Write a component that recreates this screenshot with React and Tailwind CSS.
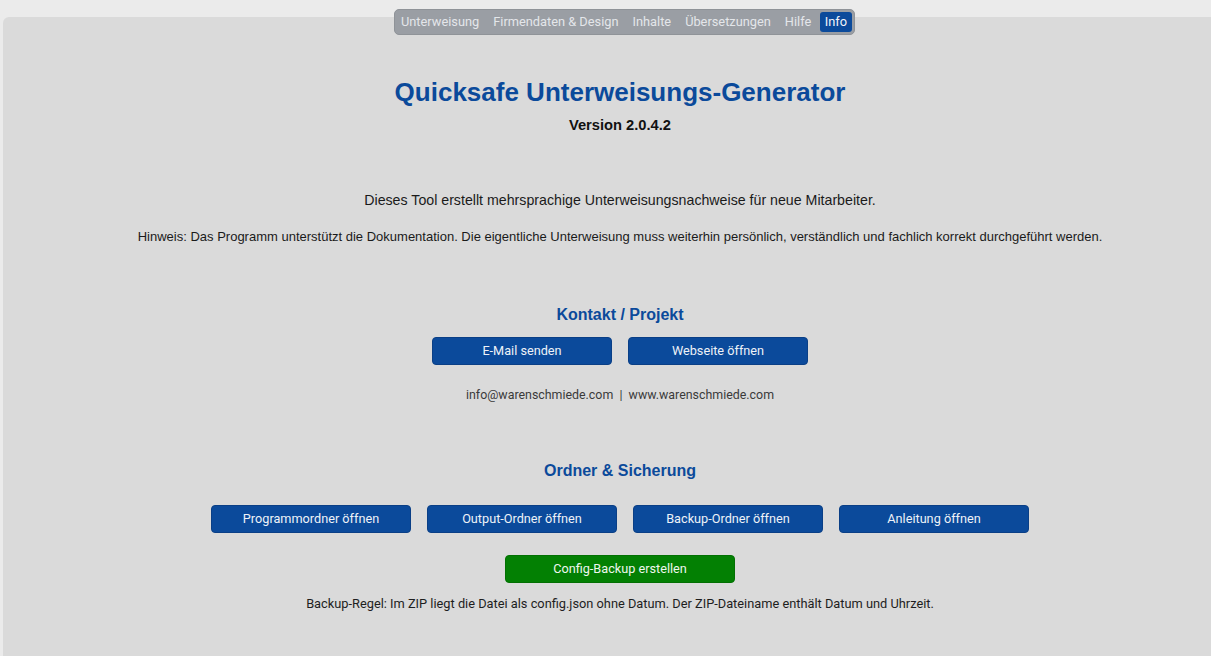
import React from "react";

const navItems = ["Unterweisung", "Firmendaten & Design", "Inhalte", "Übersetzungen", "Hilfe", "Info"];

function BlueButton({ children, w }) {
  return (
    <button
      className={`${w} h-[28px] rounded-[4px] bg-[#0b4a9b] border border-[#0a3f86] text-[12.7px] text-[#eef2f8] [font-family:Roboto,sans-serif] flex items-center justify-center whitespace-nowrap`}
    >
      {children}
    </button>
  );
}

export default function App() {
  return (
    <div className="relative w-[1211px] h-[656px] overflow-hidden bg-[#ebebeb]">
      <div className="absolute z-10 left-[394px] top-[9px] h-[26px] w-[461px] rounded-[5px] bg-[#9a9ea4] border border-[#8f9398] flex items-center pl-[1px] gap-[4px] whitespace-nowrap [font-family:Roboto,sans-serif] text-[12.8px]">
        {navItems.map((it) => (
          <span
            key={it}
            className={
              it === "Info"
                ? "h-[20px] px-[4.5px] flex items-center rounded-[3px] bg-[#0b4a9b] text-[#f2f5fa]"
                : "h-[20px] px-[5px] flex items-center text-[#e4e6ea]"
            }
          >
            {it}
          </span>
        ))}
      </div>

      <div className="ml-[3px] mt-[17px] w-[1234px] h-[700px] rounded-tl-[6px] bg-[#dadada] flex flex-col items-center pt-[61px] text-[#1a1a1a] [font-family:'Liberation_Sans',Arial,sans-serif]">
        <h1 className="text-[26px] leading-[28px] font-bold text-[#0b4a9b] whitespace-nowrap">Quicksafe Unterweisungs-Generator</h1>
        <div className="mt-[11px] text-[14.7px] leading-[16px] font-bold text-[#111]">Version 2.0.4.2</div>

        <p className="mt-[59px] text-[14.2px] leading-[16px]">Dieses Tool erstellt mehrsprachige Unterweisungsnachweise für neue Mitarbeiter.</p>
        <p className="mt-[21px] text-[13px] leading-[15px] whitespace-nowrap">
          Hinweis: Das Programm unterstützt die Dokumentation. Die eigentliche Unterweisung muss weiterhin persönlich, verständlich und fachlich korrekt durchgeführt werden.
        </p>

        <h2 className="mt-[62px] text-[16px] leading-[18px] font-bold text-[#0b4a9b]">Kontakt / Projekt</h2>
        <div className="mt-[13px] flex gap-[16px]">
          <BlueButton w="w-[180px]">E-Mail senden</BlueButton>
          <BlueButton w="w-[180px]">Webseite öffnen</BlueButton>
        </div>
        <div className="mt-[23px] text-[12.4px] leading-[14px] text-[#3a3a3a] [font-family:Roboto,sans-serif]">
          info@warenschmiede.com&nbsp; | &nbsp;www.warenschmiede.com
        </div>

        <h2 className="mt-[60px] text-[16px] leading-[18px] font-bold text-[#0b4a9b]">Ordner &amp; Sicherung</h2>
        <div className="mt-[25px] flex gap-[16px]">
          <BlueButton w="w-[200px]">Programmordner öffnen</BlueButton>
          <BlueButton w="w-[190px]">Output-Ordner öffnen</BlueButton>
          <BlueButton w="w-[190px]">Backup-Ordner öffnen</BlueButton>
          <BlueButton w="w-[190px]">Anleitung öffnen</BlueButton>
        </div>
        <button className="mt-[22px] w-[230px] h-[28px] rounded-[4px] bg-[#038003] border border-[#027002] text-[12.7px] text-[#eef7ee] [font-family:Roboto,sans-serif] flex items-center justify-center">
          Config-Backup erstellen
        </button>
        <div className="mt-[14px] text-[12.8px] leading-[14px] text-[#1e1e1e] whitespace-nowrap [font-family:Roboto,sans-serif]">
          Backup-Regel: Im ZIP liegt die Datei als config.json ohne Datum. Der ZIP-Dateiname enthält Datum und Uhrzeit.
        </div>
      </div>
    </div>
  );
}
